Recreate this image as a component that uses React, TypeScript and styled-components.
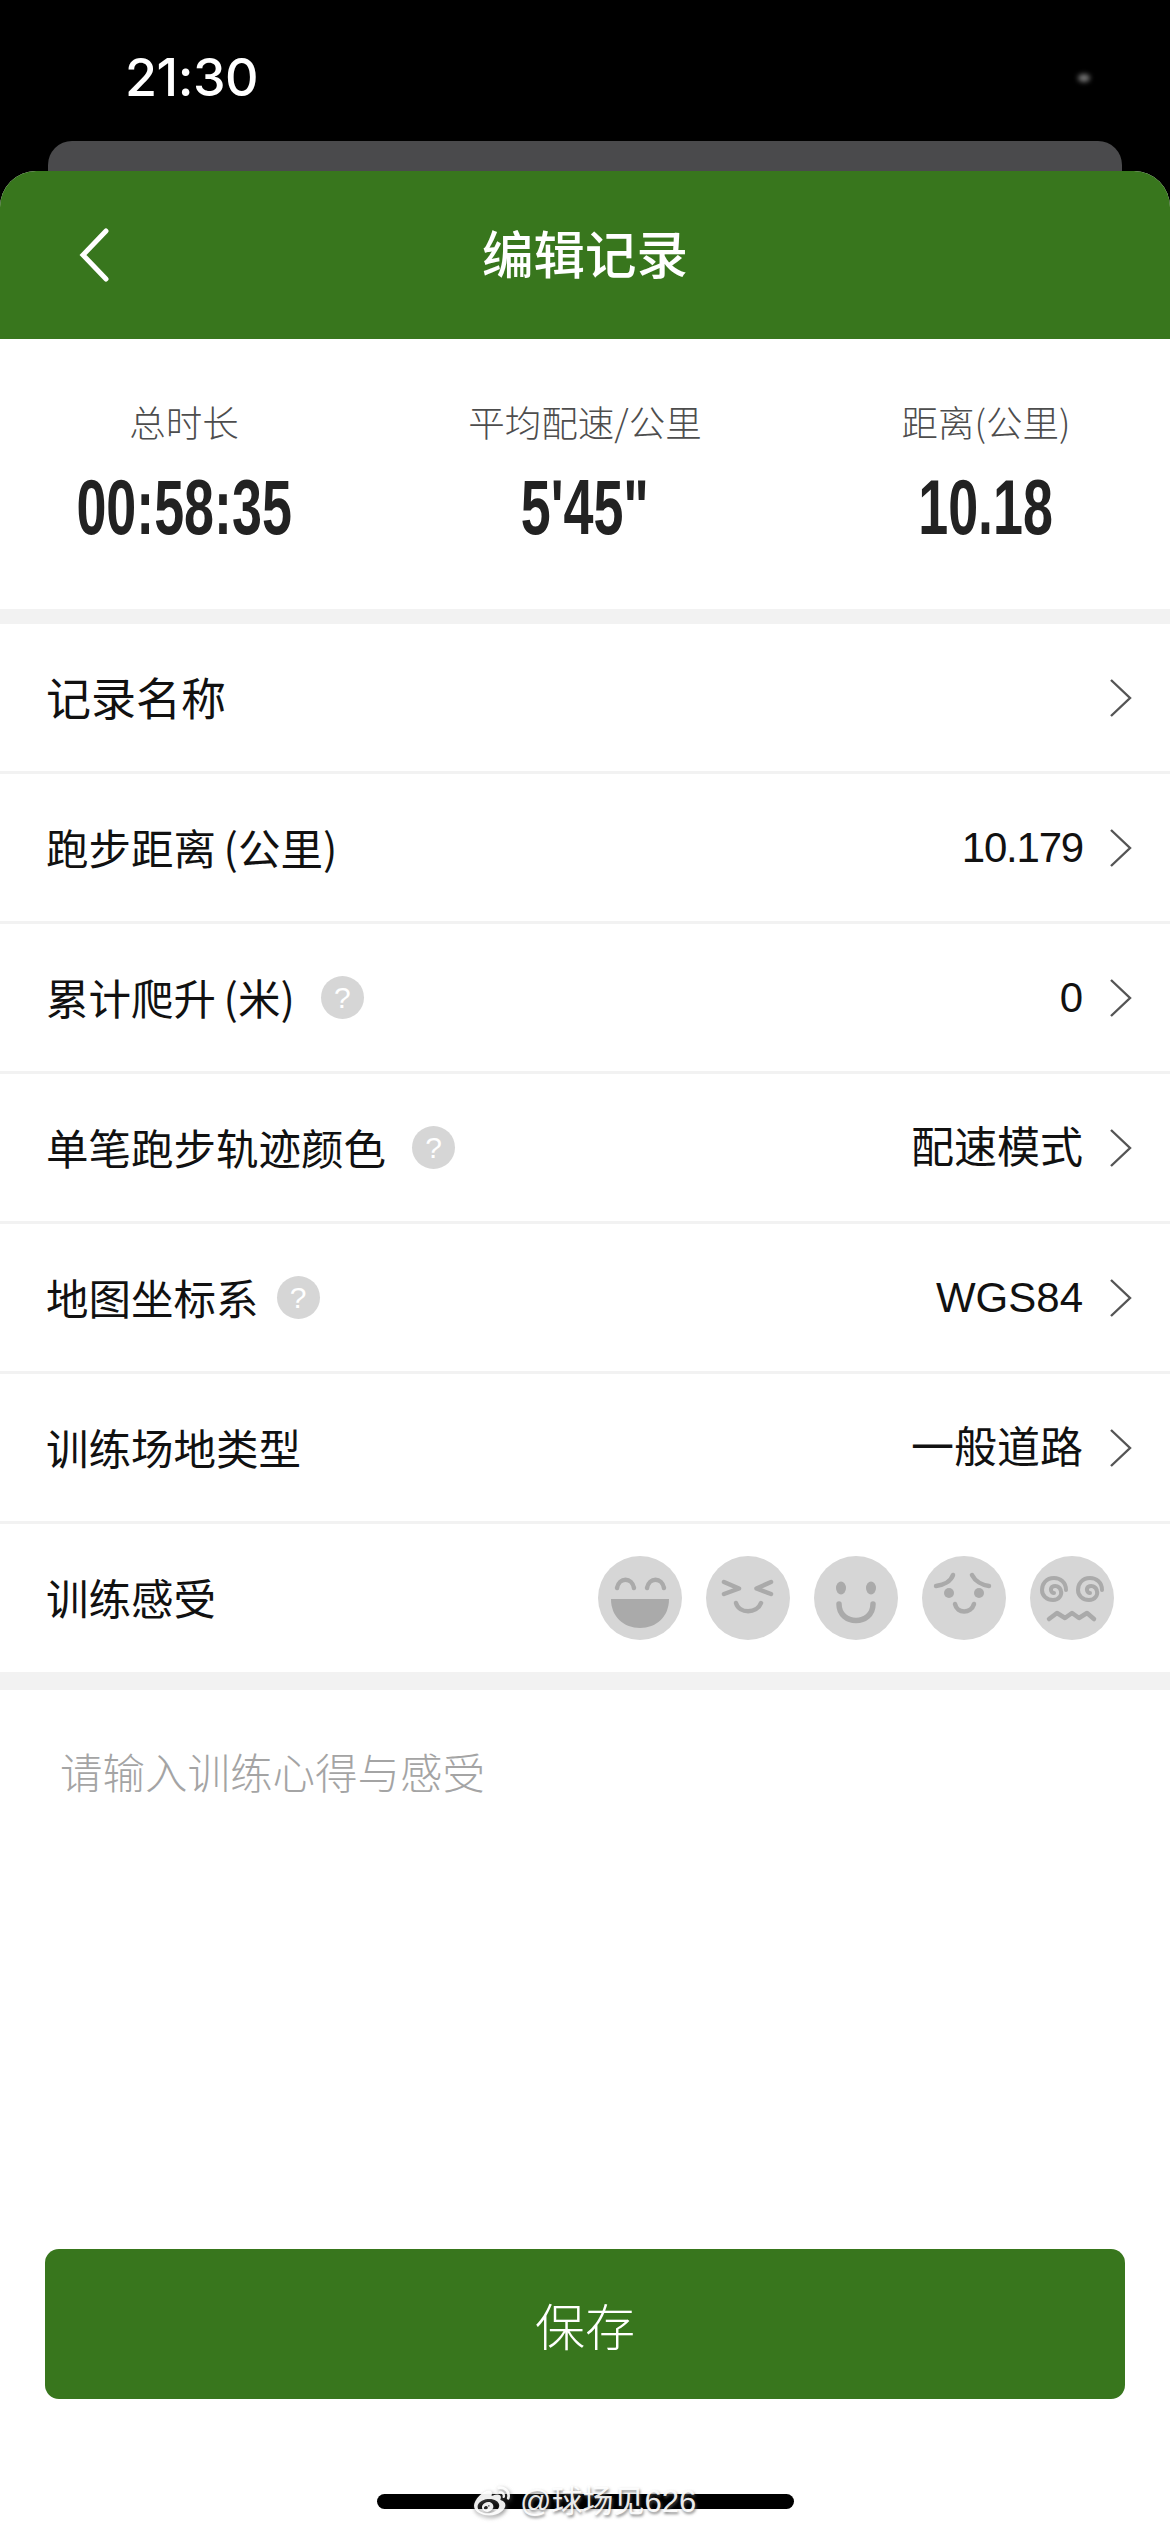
import React from "react";
import styled, { createGlobalStyle } from "styled-components";
import { FaWeibo } from "react-icons/fa";

const cjk = `"Liberation Sans", "Noto Sans CJK SC", sans-serif`;

const Global = createGlobalStyle`
  html, body { margin: 0; padding: 0; background: #000; }
  * { box-sizing: border-box; }
`;

const Page = styled.div`
  position: relative;
  width: 1170px;
  height: 2532px;
  background: #000;
  overflow: hidden;
  display: flex;
  flex-direction: column;
  font-family: ${cjk};
`;

const StatusBar = styled.div`
  position: relative;
  height: 141px;
  padding: 49px 0 0 125px;
  flex: none;
`;

const Time = styled.span`
  font-family: Inter, "Liberation Sans", sans-serif;
  font-size: 52px;
  line-height: 58px;
  font-weight: 500;
  color: #fff;
  letter-spacing: -0.5px;
`;

const Smudge = styled.span`
  position: absolute;
  left: 1078px;
  top: 74px;
  width: 12px;
  height: 8px;
  background: #777;
  border-radius: 50%;
  filter: blur(2.5px);
`;

const BackCard = styled.div`
  flex: none;
  height: 30px;
  margin: 0 48px;
  background: #4a4a4c;
  border-radius: 24px 24px 0 0;
`;

const Sheet = styled.div`
  flex: 1;
  display: flex;
  flex-direction: column;
  background: #fff;
  border-radius: 36px 36px 0 0;
  overflow: hidden;
`;

const Header = styled.header`
  flex: none;
  position: relative;
  height: 168px;
  background: #38761d;
  display: flex;
  align-items: center;
  justify-content: center;
  padding-bottom: 6px;
`;

const BackIcon = styled.svg`
  position: absolute;
  left: 78px;
  top: 57px;
  width: 32px;
  height: 54px;
`;

const Title = styled.h1`
  margin: 0;
  font-family: "Noto Sans CJK SC", sans-serif;
  font-size: 51.5px;
  line-height: 60px;
  font-weight: 500;
  color: #fff;
`;

const Stats = styled.section`
  flex: none;
  height: 270px;
  display: grid;
  grid-template-columns: 368px 434px 368px;
  padding-top: 58px;
`;

const Stat = styled.div`
  display: flex;
  flex-direction: column;
  align-items: center;
`;

const StatLabel = styled.span`
  font-family: "Noto Sans CJK SC", sans-serif;
  font-size: 36.5px;
  line-height: 50px;
  font-weight: 300;
  color: #4d4d4d;
`;

const StatValue = styled.strong`
  margin-top: 20px;
  font-family: "Liberation Sans", sans-serif;
  font-size: 78px;
  line-height: 80px;
  font-weight: 700;
  color: #222;
  transform: scaleX(0.69);
`;

const Band = styled.div<{ $h: number }>`
  flex: none;
  height: ${(p) => p.$h}px;
  background: #f2f2f2;
`;

const Row = styled.div<{ $h?: number }>`
  flex: none;
  height: ${(p) => p.$h ?? 150}px;
  display: flex;
  align-items: center;
  padding: 0 38px 0 46px;
  border-bottom: 3px solid #f2f2f2;
  &:last-of-type {
    border-bottom: none;
  }
`;

const Label = styled.span<{ $size?: number }>`
  margin-top: -2px;
  font-family: "Noto Sans CJK SC", sans-serif;
  font-size: ${(p) => p.$size ?? 42.5}px;
  line-height: 60px;
  font-weight: 400;
  word-spacing: -2px;
  color: #111;
`;

const Help = styled.span<{ $gap?: number }>`
  margin-left: ${(p) => p.$gap ?? 26}px;
  width: 43px;
  height: 43px;
  border-radius: 50%;
  background: #d6d6d6;
  color: #fff;
  font-family: "Liberation Sans", sans-serif;
  font-size: 30px;
  font-weight: 400;
  line-height: 43px;
  text-align: center;
`;

const Value = styled.span<{ $tight?: boolean; $size?: number }>`
  margin-left: auto;
  font-family: "Liberation Sans", "Noto Sans CJK SC", sans-serif;
  font-size: ${(p) => p.$size ?? 42}px;
  line-height: 60px;
  color: #111;
  letter-spacing: ${(p) => (p.$tight ? "-1.2px" : "0")};
`;

const Chevron = styled.svg`
  margin-left: 26px;
  width: 23px;
  height: 40px;
  flex: none;
`;

const Faces = styled.div`
  margin-left: auto;
  margin-right: 18px;
  display: flex;
  gap: 24px;
`;

const Face = styled.svg`
  width: 84px;
  height: 84px;
  display: block;
`;

const Notes = styled.div`
  flex: 1;
  padding: 51px 60px 0;
  font-family: "Noto Sans CJK SC", sans-serif;
  font-size: 42.5px;
  line-height: 60px;
  font-weight: 300;
  color: #a4a4a4;
`;

const SaveButton = styled.button`
  flex: none;
  margin: 0 45px;
  height: 150px;
  border: none;
  border-radius: 14px;
  background: #38761d;
  color: #fff;
  font-family: "Noto Sans CJK SC", sans-serif;
  font-size: 50px;
  font-weight: 300;
`;

const Footer = styled.div`
  flex: none;
  height: 133px;
  display: flex;
  justify-content: center;
  padding-top: 95px;
`;

const HomeBar = styled.div`
  width: 417px;
  height: 15px;
  background: #000;
  border-radius: 8px;
`;

const Watermark = styled.div`
  position: absolute;
  left: 472px;
  top: 2482px;
  display: flex;
  align-items: center;
  gap: 8px;
  color: rgba(255, 255, 255, 0.92);
  font-family: "Liberation Sans", "Noto Sans CJK SC", sans-serif;
  font-size: 31px;
  line-height: 40px;
  text-shadow: 1px 2px 3px rgba(90, 90, 90, 0.75);
`;

const WeiboMark = styled(FaWeibo)`
  width: 40px;
  height: 36px;
  filter: drop-shadow(1px 2px 2px rgba(90, 90, 90, 0.75));
`;

const ink = "#aaaaaa";
const line = { fill: "none", stroke: ink, strokeWidth: 4.5, strokeLinecap: "round", strokeLinejoin: "round" } as const;
const spiral = "C36 26 30 22 24 22C16 22 12 28 12 34C12 40 17 44 23 44C29 44 32 39 31 35C30 30 25 29 22 31C20 33 21 37 24 37";

const faces = [
  <>
    <path {...line} d="M19 32C21 21 34 21 36 32M49 32C51 21 64 21 66 32" />
    <path fill={ink} d="M13 43H71C71 61 58 72 42 72S13 61 13 43Z" />
  </>,
  <>
    <path {...line} d="M18 26L33 32.5L18 38M65 26L50.5 32.5L65 38" />
    <path {...line} d="M30 47C33 58 51 58 55 47" />
  </>,
  <>
    <ellipse cx="27" cy="32" rx="5" ry="6.5" fill={ink} />
    <ellipse cx="57" cy="32" rx="5" ry="6.5" fill={ink} />
    <path fill="none" stroke={ink} strokeWidth="5.5" strokeLinecap="round" d="M25 48C25 70 59 70 59 48" />
  </>,
  <>
    <path {...line} d="M31 19C29 25 22 29 14 30M50 19C53 25 60 29 67 30" />
    <circle cx="27" cy="37" r="5" fill={ink} />
    <circle cx="57" cy="37" r="5" fill={ink} />
    <path {...line} d="M33 48C35 58 49 58 52 48" />
  </>,
  <>
    <path {...line} strokeWidth="4" d={`M36 34${spiral}`} />
    <path {...line} strokeWidth="4" transform="translate(36 0)" d={`M36 34${spiral}`} />
    <path {...line} d="M19 63L27 57L35 62L42 57L49 62L57 57L64 63" />
  </>,
];

const RightChevron = () => (
  <Chevron viewBox="0 0 23 40">
    <path d="M2 2L21 20L2 38" fill="none" stroke="#555" strokeWidth="2.4" />
  </Chevron>
);

const stats = [
  ["总时长", "00:58:35"],
  ["平均配速/公里", `5'45"`],
  ["距离(公里)", "10.18"],
];

const rows: { label: string; size?: number; help?: number; value?: string; tight?: boolean; valueSize?: number }[] = [
  { label: "记录名称", size: 45 },
  { label: "跑步距离 (公里)", value: "10.179", tight: true },
  { label: "累计爬升 (米)", help: 26, value: "0" },
  { label: "单笔跑步轨迹颜色", help: 26, value: "配速模式", valueSize: 43 },
  { label: "地图坐标系", help: 18, value: "WGS84" },
  { label: "训练场地类型", value: "一般道路", valueSize: 43 },
];

export default function App() {
  return (
    <Page>
      <Global />
      <StatusBar>
        <Time>21:30</Time>
        <Smudge />
      </StatusBar>
      <BackCard />
      <Sheet>
        <Header>
          <BackIcon viewBox="0 0 32 54">
            <path d="M28 3L5 27L28 51" fill="none" stroke="#fff" strokeWidth="5" strokeLinecap="round" />
          </BackIcon>
          <Title>编辑记录</Title>
        </Header>
        <Stats>
          {stats.map(([label, value]) => (
            <Stat key={label}>
              <StatLabel>{label}</StatLabel>
              <StatValue>{value}</StatValue>
            </Stat>
          ))}
        </Stats>
        <Band $h={15} />
        <div>
          {rows.map((r) => (
            <Row key={r.label}>
              <Label $size={r.size}>{r.label}</Label>
              {r.help !== undefined && <Help $gap={r.help}>?</Help>}
              <Value $tight={r.tight} $size={r.valueSize}>{r.value}</Value>
              <RightChevron />
            </Row>
          ))}
          <Row $h={148}>
            <Label>训练感受</Label>
            <Faces>
              {faces.map((f, i) => (
                <Face key={i} viewBox="0 0 84 84">
                  <circle cx="42" cy="42" r="42" fill="#d6d6d6" />
                  {f}
                </Face>
              ))}
            </Faces>
          </Row>
        </div>
        <Band $h={18} />
        <Notes>请输入训练心得与感受</Notes>
        <SaveButton>保存</SaveButton>
        <Footer>
          <HomeBar />
        </Footer>
      </Sheet>
      <Watermark>
        <WeiboMark />
        <span>@球场见626</span>
      </Watermark>
    </Page>
  );
}
